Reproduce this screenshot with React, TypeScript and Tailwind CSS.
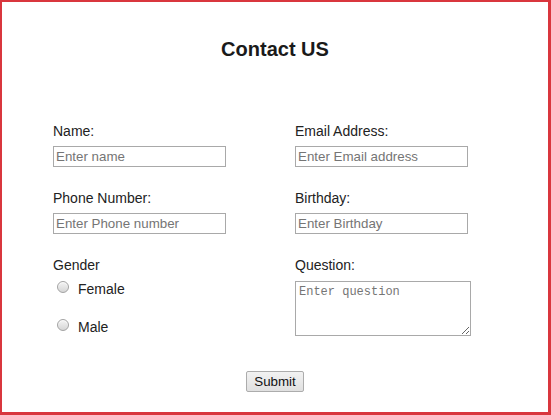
import React from 'react';

const Radio = ({ label, className = '' }: { label: string; className?: string }) => (
  <label className={`flex items-start ${className}`}>
    <span className="ml-[4px] mt-[0px] h-[12px] w-[12px] rounded-full border border-[#a3a3a3] bg-gradient-to-b from-[#f4f4f4] to-[#d6d6d6] shadow-[inset_0_1px_1px_rgba(255,255,255,0.8)]" />
    <span className="ml-[9px] text-[14px] leading-[16px]">{label}</span>
  </label>
);

const inputCls =
  'mt-[7px] block h-[21px] w-[173px] border border-[#a9a9a9] px-[2px] text-[13.33px] leading-[15px] text-[#222] outline-none placeholder:text-[#757575]';

export default function App() {
  return (
    <div
      className="box-border h-[415px] w-[551px] border-l-2 border-t-2 border-r-[3px] border-b-[3px] border-[#d9363e] bg-white pt-[35px] text-[#222]"
      style={{ fontFamily: '"Liberation Sans", Arial, sans-serif' }}
    >
      <h2 className="text-center text-[20px] font-bold leading-[24px] text-[#1a1a1a]">Contact US</h2>

      <form className="mt-[62px]" onSubmit={(e) => e.preventDefault()}>
        <div className="grid grid-cols-[242px_1fr] pl-[51px]">
          {/* left column */}
          <div className="flex flex-col">
            <label className="text-[14px] leading-[16px]">Name:</label>
            <input className={inputCls} placeholder="Enter name" />

            <label className="mt-[23px] text-[14px] leading-[16px]">Phone Number:</label>
            <input className={inputCls} placeholder="Enter Phone number" />

            <span className="mt-[23px] text-[14px] leading-[16px]">Gender</span>
            <Radio label="Female" className="mt-[8px]" />
            <Radio label="Male" className="mt-[22px]" />
          </div>

          {/* right column */}
          <div className="flex flex-col">
            <label className="text-[14px] leading-[16px]">Email Address:</label>
            <input className={inputCls} placeholder="Enter Email address" />

            <label className="mt-[23px] text-[14px] leading-[16px]">Birthday:</label>
            <input className={inputCls} placeholder="Enter Birthday" />

            <label className="mt-[23px] text-[14px] leading-[16px]">Question:</label>
            <textarea
              className="mt-[8px] block h-[55px] w-[176px] border border-[#a9a9a9] px-[3px] py-[3px] text-[12px] leading-[15px] outline-none placeholder:text-[#757575]"
              style={{ fontFamily: '"Liberation Mono", "DejaVu Sans Mono", monospace' }}
              placeholder="Enter question"
            />
          </div>
        </div>

        <div className="mt-[35px] flex justify-center">
          <button
            type="submit"
            className="h-[21px] rounded-[2px] border border-[#acacac] bg-gradient-to-b from-[#f2f2f2] to-[#e0e0e0] px-[7px] text-[13.33px] leading-[15px] text-[#111]"
          >
            Submit
          </button>
        </div>
      </form>
    </div>
  );
}
